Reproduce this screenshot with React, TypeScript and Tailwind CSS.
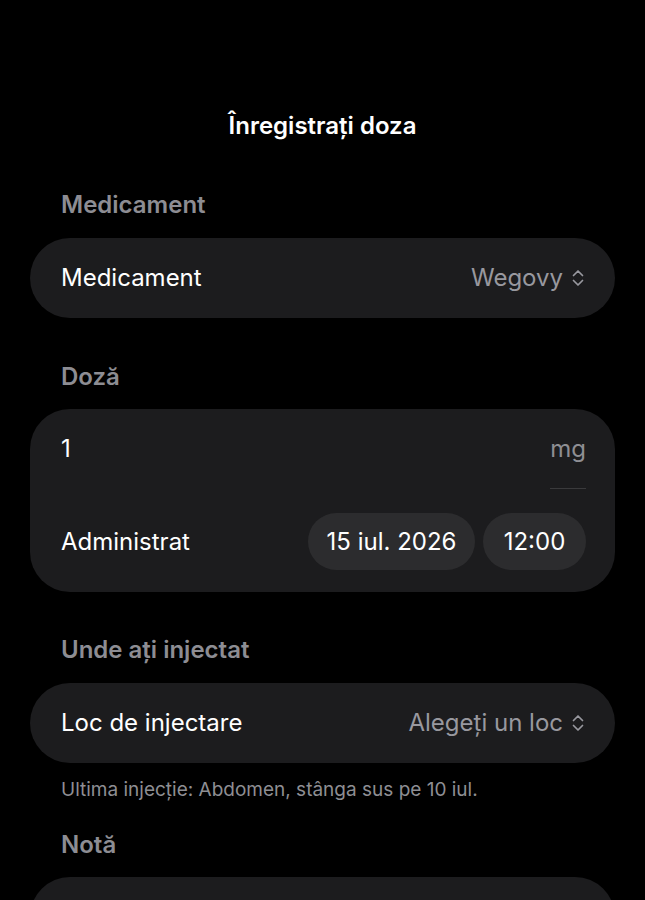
import type { ReactNode } from "react";

const font = { fontFamily: '"Inter", "Noto Sans", sans-serif' };

function UpDown() {
  return (
    <svg width="14" height="20" viewBox="0 0 14 20" fill="none" className="ml-[8px] shrink-0">
      <path d="M2.5 7.5 7 3l4.5 4.5" stroke="currentColor" strokeWidth="1.7" strokeLinecap="round" strokeLinejoin="round" />
      <path d="M2.5 12.5 7 17l4.5-4.5" stroke="currentColor" strokeWidth="1.7" strokeLinecap="round" strokeLinejoin="round" />
    </svg>
  );
}

function Header({ children, className = "" }: { children: ReactNode; className?: string }) {
  return (
    <div className={`px-[31px] text-[24px] leading-[28px] font-semibold text-[#8d8d93] ${className}`}>
      {children}
    </div>
  );
}

function PickerRow({ label, value }: { label: string; value: string }) {
  return (
    <div className="flex h-[80px] items-center justify-between rounded-full bg-[#1c1c1e] pl-[31px] pr-[30px]">
      <span className="text-[24px] leading-[28px] text-white">{label}</span>
      <span className="flex items-center text-[24px] leading-[28px] text-[#98989f]">
        {value}
        <UpDown />
      </span>
    </div>
  );
}

export default function App() {
  return (
    <div style={font} className="h-[900px] overflow-hidden bg-black px-[30px] antialiased">
      <h1 className="pt-[112px] text-center text-[24px] leading-[28px] font-semibold text-white">
        Înregistrați doza
      </h1>

      <Header className="mt-[51px] mb-[19px]">Medicament</Header>
      <PickerRow label="Medicament" value="Wegovy" />

      <Header className="mt-[45px] mb-[18px]">Doză</Header>
      <div className="rounded-[40px] bg-[#1c1c1e] pt-[26px] pb-[22px] pl-[31px] pr-[29px]">
        <div className="flex items-start justify-between">
          <span className="text-[24px] leading-[28px] text-white">1</span>
          <span className="border-b border-[#3a3a3c] pb-[25px] text-[24px] leading-[28px] text-[#8e8e93]">
            mg
          </span>
        </div>
        <div className="mt-[24px] flex items-center justify-between">
          <span className="text-[24px] leading-[28px] text-white">Administrat</span>
          <div className="flex gap-[8px]">
            <span className="flex h-[57px] w-[167px] items-center justify-center rounded-full bg-[#2c2c2e] text-[24px] text-white">
              15 iul. 2026
            </span>
            <span className="flex h-[57px] w-[103px] items-center justify-center rounded-full bg-[#2c2c2e] text-[24px] text-white">
              12:00
            </span>
          </div>
        </div>
      </div>

      <Header className="mt-[44px] mb-[19px]">Unde ați injectat</Header>
      <PickerRow label="Loc de injectare" value="Alegeți un loc" />
      <p className="mt-[16px] px-[31px] text-[19px] leading-[22px] text-[#8e8e93]">
        Ultima injecție: Abdomen, stânga sus pe 10 iul.
      </p>

      <Header className="mt-[30px] mb-[18px]">Notă</Header>
      <div className="h-[120px] rounded-[40px] bg-[#1c1c1e]" />
    </div>
  );
}
